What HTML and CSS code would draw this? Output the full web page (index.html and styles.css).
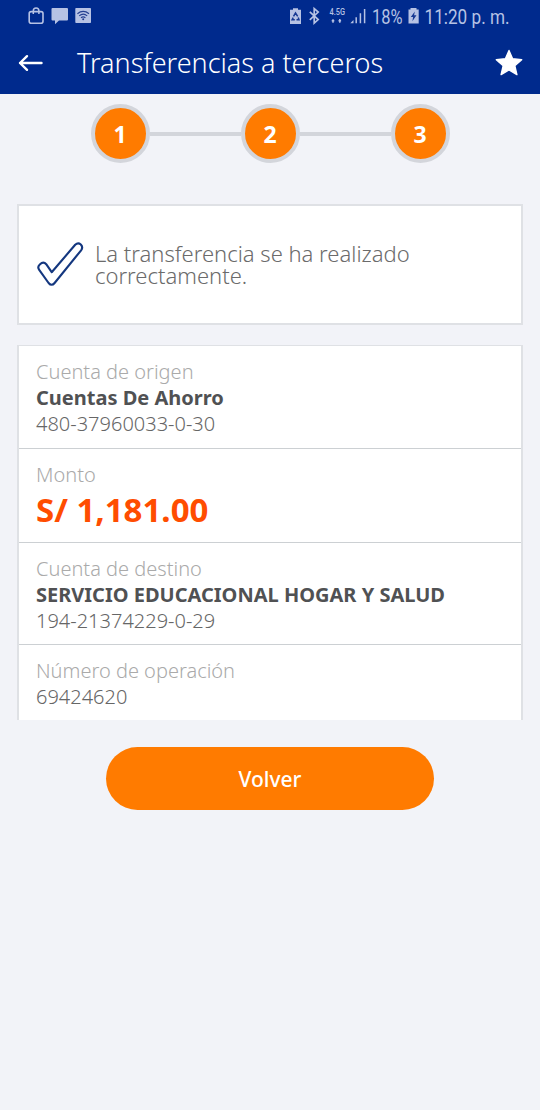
FILE: index.html
```html
<!DOCTYPE html>
<html lang="es">
<head>
<meta charset="utf-8">
<title>Transferencias a terceros</title>
<link rel="stylesheet" href="styles.css">
</head>
<body>
<header class="header">
  <div class="status">
    <svg class="status-left" width="64" height="20" viewBox="28 6 64 20">
      <rect x="29.2" y="11.6" width="13.8" height="11.6" rx="2" fill="none" stroke="#b6c2e4" stroke-width="1.6"/>
      <path d="M33.3 14V11Q33.3 8 36.1 8Q38.9 8 38.9 11V14" fill="none" stroke="#b6c2e4" stroke-width="1.5"/>
      <path d="M52.5 8H67Q68 8 68 9V19.5Q68 20.5 67 20.5H59L55 24.2V20.5H52.5Q51.5 20.5 51.5 19.5V9Q51.5 8 52.5 8Z" fill="#b6c2e4"/>
      <rect x="75.3" y="8" width="15.7" height="15" rx="0.8" fill="#b6c2e4"/>
      <path d="M77.4 13.7Q83.2 9 89 13.7M79.2 15.8Q83.2 12.4 87.2 15.8M81 17.8Q83.2 16 85.4 17.8" fill="none" stroke="#253f91" stroke-width="1.1"/>
      <circle cx="83.2" cy="19.2" r="1" fill="#253f91"/>
    </svg>
    <div class="status-right">
      <svg width="80" height="22" viewBox="288 5 80 22">
        <path d="M293 8.2H298V9.8H301V24H290V9.8H293Z" fill="#b6c2e4"/>
        <path d="M293.5 16.3L295.5 13L297.7 16.3M298.2 17.4L299 19.8H296.5M294.8 19.8H292.1L293.2 17.6" fill="none" stroke="#173993" stroke-width="1.5"/>
        <path d="M309.8 11.8L318.2 19.6L314.2 23.2V8.6L318.2 12L309.8 19.8" fill="none" stroke="#b6c2e4" stroke-width="1.7"/>
        <text class="network" x="329.5" y="15" textLength="15.5" lengthAdjust="spacingAndGlyphs">4.5G</text>
        <path d="M333 19.2V22.8M331.7 20.8L334.3 20.8M339.8 22.8V19M338.5 20.8H341.1" fill="none" stroke="#b6c2e4" stroke-width="1.5"/>
        <path d="M350.3 23.3L353.5 20V23.3Z" fill="#b6c2e4"/>
        <path d="M356.2 17.2V23.3M360.4 13.3V23.3M364.6 9V23.3" stroke="#b6c2e4" stroke-width="1.5"/>
      </svg>
      <svg class="status-percent" width="32" height="22" viewBox="372 5 32 22"><text class="status-text" x="372" y="23.5" textLength="30.5" lengthAdjust="spacingAndGlyphs">18%</text></svg>
      <svg width="14" height="22" viewBox="407 5 14 22">
        <path d="M410.5 8H416.5V9.6H418.7V23.4H408.5V9.6H410.5Z" fill="#b6c2e4"/>
        <path d="M414.8 11.5L410.8 17.1H413.1L412.4 21.2L416.5 15.3H414.1Z" fill="#173993"/>
      </svg>
      <svg class="status-clock" width="88" height="24" viewBox="424 5 88 24"><text class="status-text" x="424.5" y="23.5" textLength="85" lengthAdjust="spacingAndGlyphs">11:20 p. m.</text></svg>
    </div>
  </div>
  <div class="appbar">
    <svg class="back" width="26" height="20" viewBox="0 0 26 20"><path d="M2 10H23.5M9 3.2L2 10L9 16.8" fill="none" stroke="#fff" stroke-width="2.4" stroke-linecap="round" stroke-linejoin="round"/></svg>
    <h1 class="title">Transferencias a terceros</h1>
    <svg class="star" width="28" height="28" viewBox="0 0 28 28"><path d="M14 1.5L17.6 9.8L26.7 10.6L19.8 16.6L21.9 25.6L14 21L6.1 25.6L8.2 16.6L1.3 10.6L10.4 9.8Z" fill="#fff" stroke="#fff" stroke-width="1.4" stroke-linejoin="round"/></svg>
  </div>
</header>
<main class="content">
  <div class="steps">
    <span class="step">1</span><span class="line"></span><span class="step">2</span><span class="line"></span><span class="step">3</span>
  </div>
  <section class="notice">
    <svg class="check" width="48" height="48" viewBox="0 0 48 48"><path d="M4 23.2Q7.5 20 10.2 23.2L15.7 31.2L39.2 3.8Q42 1.2 44.8 3.5Q47.4 6.3 45.1 9.3L18.6 42Q15.6 45.6 12.6 42L3.2 28.8Q1 25.8 4 23.2Z" fill="none" stroke="#14377f" stroke-width="2.1" stroke-linejoin="round"/></svg>
    <p class="message"><span class="m1">La transferencia se ha realizado</span><br><span class="m2">correctamente.</span></p>
  </section>
  <section class="details">
    <div class="row origin">
      <div class="label l1">Cuenta de origen</div>
      <div class="name n1">Cuentas De Ahorro</div>
      <div class="number d1">480-37960033-0-30</div>
    </div>
    <div class="row sum">
      <div class="label l2">Monto</div>
      <div class="amount">S/ 1,181.00</div>
    </div>
    <div class="row destination">
      <div class="label l3">Cuenta de destino</div>
      <div class="name n2">SERVICIO EDUCACIONAL HOGAR Y SALUD</div>
      <div class="number d2">194-21374229-0-29</div>
    </div>
    <div class="row operation">
      <div class="label l4">Número de operación</div>
      <div class="number d3">69424620</div>
    </div>
  </section>
  <button class="button" type="button">Volver</button>
</main>
</body>
</html>
```
FILE: styles.css
```css
* { box-sizing: border-box; }
body {
  margin: 0;
  min-height: 1110px;
  background: #f2f3f8;
  font-family: "Noto Sans", "Open Sans", sans-serif;
  color: #6b6b6b;
}
.header { height: 94px; background: #002a8d; color: #fff; }
.status { display: flex; justify-content: space-between; height: 32px; padding: 5px 28px 0; }
.status-left { margin-top: 1px; }
.status-right { display: flex; }
.status-percent { margin-left: 4px; }
.status-right svg:nth-child(3) { margin-left: 3px; }
.status-clock { margin-left: 3px; }
.status-text { font: 400 19.5px Roboto, sans-serif; fill: #b6c2e4; }
.network { font: 500 8.5px Roboto, sans-serif; fill: #b6c2e4; }
.status-right { margin-right: 0; }
.appbar { display: flex; align-items: center; height: 62px; padding: 0 17px 0 18px; }
.title { margin: 0 0 0 33px; font-size: 27px; line-height: 36px; font-weight: 300; white-space: nowrap; }
.star { margin-left: auto; }
.content { display: flex; flex-direction: column; padding: 10px 17px 0; }
.steps { display: flex; align-items: center; justify-content: center; height: 59px; }
.step {
  display: flex; align-items: center; justify-content: center;
  width: 59px; height: 59px; border: 4px solid #d3d5db; border-radius: 50%;
  background: #ff7b00; color: #fff; font-size: 23px; font-weight: 700;
}
.line { width: 91px; height: 4px; background: #d3d5db; }
.notice {
  display: flex; align-items: center; height: 121px; margin-top: 41px;
  padding: 0 17px; border: 2px solid #dfe1e5; background: #fff;
}
.message { margin: 0 0 0 11px; font-size: 22px; line-height: 21.5px; font-weight: 300; white-space: nowrap; }
.details { margin-top: 20px; height: 375px; border: solid #dfe1e5; border-width: 1px 2px 0; background: #fff; }
.row { padding: 13px 17px 0; border-bottom: 1px solid #ccd0d3; white-space: nowrap; }
.origin { height: 103px; }
.sum { height: 94px; }
.destination { height: 102px; }
.operation { border-bottom: 0; }
.label, .name, .number { font-size: 20px; line-height: 26px; }
.label { color: #aaa; font-weight: 300; }
.name { color: #505153; font-weight: 700; }
.number { font-weight: 300; color: #666; }
.amount { color: #ff4d00; font-size: 33px; line-height: 43px; font-weight: 700; }
.button {
  align-self: center; width: 328px; height: 63px; margin-top: 27px; padding: 0;
  border: 0; border-radius: 32px; background: #ff7b00; color: #fff;
  font: 500 21px/28px "Noto Sans", sans-serif;
}
```
